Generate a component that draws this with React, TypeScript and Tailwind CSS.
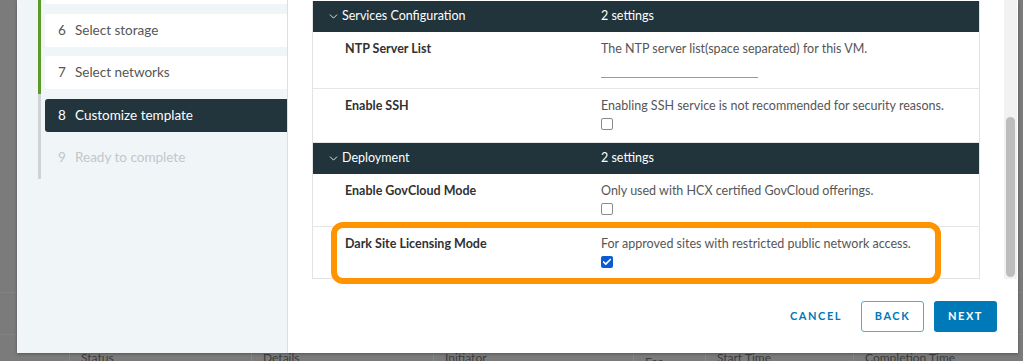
import { ChevronDown, Check } from 'lucide-react';

const steps = [
  { n: 5, label: '', state: 'done' },
  { n: 6, label: 'Select storage', state: 'done' },
  { n: 7, label: 'Select networks', state: 'done' },
  { n: 8, label: 'Customize template', state: 'active' },
  { n: 9, label: 'Ready to complete', state: 'todo' },
];

const Checkbox = ({ checked }: { checked?: boolean }) =>
  checked ? (
    <span className="flex h-[12px] w-[12px] items-center justify-center rounded-[2px] bg-[#0b5cd0]">
      <Check className="h-[10px] w-[10px] text-white" strokeWidth={4} />
    </span>
  ) : (
    <span className="block h-[12px] w-[12px] rounded-[2px] border border-[#8a8a8a] bg-white" />
  );

const GroupHeader = ({ title, count }: { title: string; count: string }) => (
  <div className="flex h-[31px] items-center bg-[#21333b] text-[12.5px] text-white">
    <div className="flex w-[288px] items-center pl-[14px]">
      <ChevronDown className="h-[13px] w-[13px]" strokeWidth={1.6} />
      <span className="ml-[2px]">{title}</span>
    </div>
    <span>{count}</span>
  </div>
);

const Row = ({
  label,
  desc,
  children,
  height,
  last,
}: {
  label: string;
  desc: string;
  children?: React.ReactNode;
  height: string;
  last?: boolean;
}) => (
  <div className={`flex ${height} pt-[8px] ${last ? '' : 'border-b border-[#e6e6e6]'}`}>
    <div className="w-[288px] pl-[32px] text-[12.5px] font-bold text-[#313131]">{label}</div>
    <div className="flex flex-col">
      <div className="text-[12.5px] text-[#565656]">{desc}</div>
      <div className="mt-[2px]">{children}</div>
    </div>
  </div>
);

export default function App() {
  return (
    <div
      className="relative h-[361px] w-[1023px] overflow-hidden bg-[#7b7b7b]"
      style={{ fontFamily: 'Lato, "Liberation Sans", sans-serif' }}
    >
      {/* background table under the overlay */}
      <div className="flex h-full flex-col">
        <div className="h-[293px] border-b border-[#828282]" />
        <div className="h-[42px] border-b border-[#828282]" />
        <div className="flex h-[26px] text-[12px] text-[#3a3a3a]">
          <div className="w-[70px] border-r border-[#888]" />
          <div className="w-[182px] border-r border-[#888] pl-[11px] pt-[14px]">Status</div>
          <div className="w-[182px] border-r border-[#888] pl-[11px] pt-[14px]">Details</div>
          <div className="w-[200px] border-r border-[#888] pl-[11px] pt-[14px]">Initiator</div>
          <div className="w-[72px] border-r border-[#888] pl-[11px] pt-[18px]">For</div>
          <div className="w-[148px] border-r border-[#888] pl-[11px] pt-[14px]">Start Time</div>
          <div className="flex-1 pl-[11px] pt-[14px]">Completion Time</div>
        </div>
      </div>

      {/* modal */}
      <div className="absolute left-[17px] top-0 flex h-[353px] w-[1001px] bg-white shadow-[0_1px_3px_rgba(0,0,0,0.3)]">
        {/* sidebar */}
        <div className="flex w-[271px] border-r border-[#dcdfe2] bg-[#f0f5f8] pl-[21px]">
          <div className="flex w-[3px] flex-col">
            <div className="h-[94px] bg-[#5c9b28]" />
            <div className="h-[85px] bg-[#cfd3d6]" />
          </div>
          <div className="ml-[4px] mt-[-29px] flex flex-1 flex-col gap-[9.5px]">
            {steps.map((s) => (
              <div
                key={s.n}
                className={`flex h-[33px] items-center rounded-l-[3px] pl-[13px] text-[13.5px] ${
                  s.state === 'active'
                    ? 'bg-[#22343c] text-white'
                    : s.state === 'done'
                    ? 'bg-white text-[#565656]'
                    : 'text-[#c3c7ca]'
                }`}
              >
                {s.label && (
                  <>
                    <span className="w-[17px]">{s.n}</span>
                    <span>{s.label}</span>
                  </>
                )}
              </div>
            ))}
          </div>
        </div>

        {/* main */}
        <div className="flex flex-1 flex-col">
          <div className="flex h-[279px]">
            <div className="ml-[24px] mt-[1px] w-[668px] border-x border-b border-[#e3e3e3]">
              <GroupHeader title="Services Configuration" count="2 settings" />
              <Row label="NTP Server List" desc="The NTP server list(space separated) for this VM." height="h-[57px]">
                <div className="mt-[16px] w-[157px] border-b border-[#9a9a9a]" />
              </Row>
              <Row label="Enable SSH" desc="Enabling SSH service is not recommended for security reasons." height="h-[54px]">
                <Checkbox />
              </Row>
              <GroupHeader title="Deployment" count="2 settings" />
              <Row label="Enable GovCloud Mode" desc="Only used with HCX certified GovCloud offerings." height="h-[53px]">
                <Checkbox />
              </Row>
              <Row label="Dark Site Licensing Mode" desc="For approved sites with restricted public network access." height="h-[51px]" last>
                <Checkbox checked />
              </Row>
            </div>
            <div className="ml-[24px] flex w-[13px] flex-col bg-[#f2f2f2] px-[2px] pt-[117px] pb-[2px]">
              <div className="flex-1 rounded-full bg-[#bdbdbd]" />
            </div>
          </div>

          {/* footer */}
          <div className="mt-[22px] flex items-center justify-end pr-[21px] text-[11px] font-bold tracking-[0.14em]">
            <button className="h-[31px] px-[17px] text-[#0079b8]">CANCEL</button>
            <button className="ml-[2px] h-[31px] w-[63px] rounded-[3px] border border-[#49afd9] text-[#0079b8]">BACK</button>
            <button className="ml-[10px] h-[31px] w-[63px] rounded-[3px] bg-[#0079b8] text-white">NEXT</button>
          </div>
        </div>

        {/* highlight around the setting */}
        <div className="absolute left-[314px] top-[222px] h-[62px] w-[610px] rounded-[12px] border-[6px] border-[#ff9400]" />
      </div>
    </div>
  );
}
